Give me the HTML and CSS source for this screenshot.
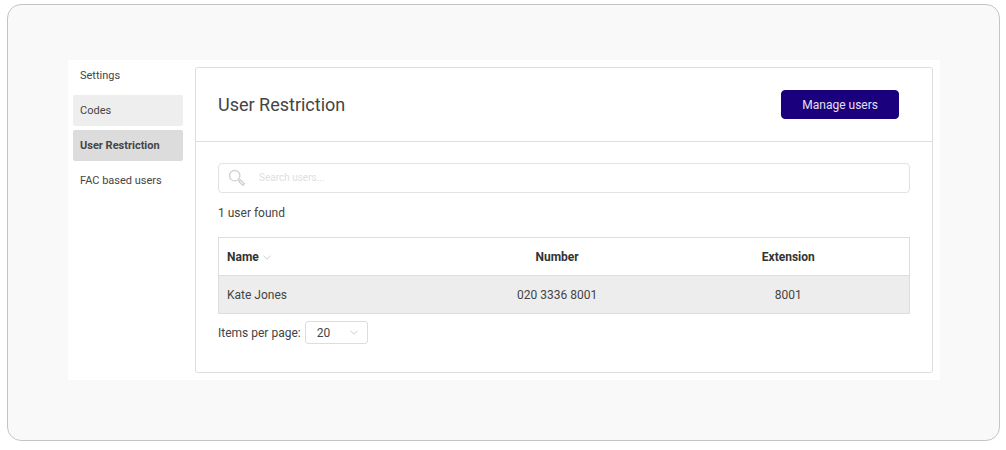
FILE: index.html
```html
<!DOCTYPE html>
<html lang="en">
<head>
  <meta charset="utf-8">
  <title>User Restriction</title>
  <link rel="stylesheet" href="styles.css">
</head>
<body>

<div class="frame">
  <div class="app">

    <nav class="sidebar">
      <a href="#settings">Settings</a>
      <a href="#codes" class="hover">Codes</a>
      <a href="#restriction" class="active">User Restriction</a>
      <a href="#fac">FAC based users</a>
    </nav>

    <main class="card">
      <header class="card-header">
        <h1>User Restriction</h1>
        <button type="button" class="manage">Manage users</button>
      </header>

      <div class="card-body">
        <div class="search">
          <svg class="search-icon" viewBox="0 0 18 18" aria-hidden="true">
            <circle cx="6.7" cy="6.7" r="5.2" />
            <path d="M10.5 10.5l1.5 1.5M12.6 11l3.8 3.7-1.6 1.6-3.8-3.7z" />
          </svg>
          <input type="text" placeholder="Search users..." aria-label="Search users">
        </div>

        <p class="count">1 user found</p>

        <table class="users">
          <thead>
            <tr>
              <th class="name">
                Name
                <svg class="chevron" viewBox="0 0 8 5" aria-hidden="true"><path d="M.5.8L4 4.2 7.5.8" /></svg>
              </th>
              <th class="number">Number</th>
              <th>Extension</th>
            </tr>
          </thead>
          <tbody>
            <tr>
              <td class="name">Kate Jones</td>
              <td>020 3336 8001</td>
              <td>8001</td>
            </tr>
          </tbody>
        </table>

        <div class="paging">
          <label for="per_page">Items per page:</label>
          <div class="select-wrap">
            <select id="per_page" name="per_page">
              <option value="10">10</option>
              <option value="20" selected>20</option>
              <option value="50">50</option>
            </select>
            <svg class="chevron" viewBox="0 0 8 5" aria-hidden="true"><path d="M.5.8L4 4.2 7.5.8" /></svg>
          </div>
        </div>
      </div>
    </main>

  </div>
</div>

</body>
</html>
```

FILE: styles.css
```css
* {
  box-sizing: border-box;
}

body {
  margin: 4px 6px 8px 7px;
  background: #fff;
  color: #444;
  font-family: Roboto, "Liberation Sans", sans-serif;
  font-size: 12px;
  line-height: 16px;
}

input,
select,
button {
  font: inherit;
  color: inherit;
}

.frame {
  padding: 55px 59px 60px 60px;
  background: #f9f9f9;
  border: 1px solid #c4c4c4;
  border-radius: 14px;
}

.app {
  display: flex;
  gap: 12px;
  padding: 0 7px 7px 5px;
  background: #fff;
}

.sidebar {
  display: flex;
  flex-direction: column;
  flex: 0 0 110px;
  gap: 4px;
  font-size: 11px;
}

.sidebar a {
  padding: 8px 7px 7px;
  border-radius: 2px;
  color: #444;
  text-decoration: none;
}

.sidebar .hover {
  background: #eee;
}

.sidebar .active {
  background: #dcdcdc;
  font-weight: bold;
}

.card {
  flex: 1;
  margin-top: 7px;
  border: 1px solid #ddd;
  border-radius: 3px;
}

.card-header {
  display: flex;
  align-items: center;
  justify-content: space-between;
  padding: 22px 33px 22px 22px;
  border-bottom: 1px solid #ddd;
}

h1 {
  margin: 0;
  font-size: 18px;
  font-weight: normal;
  line-height: 24px;
}

.manage {
  padding: 6px 20px 5px;
  border: 1px solid #1b007d;
  border-radius: 4px;
  background: #1b007d;
  color: #e4e0f0;
}

.card-body {
  padding: 21px 22px 28px;
}

.search {
  display: flex;
  align-items: center;
  gap: 13px;
  height: 30px;
  padding: 0 9px;
  border: 1px solid #e2e2e2;
  border-radius: 4px;
}

.search-icon {
  width: 18px;
  height: 18px;
  fill: none;
  stroke: #d2d2d2;
  stroke-width: 1.4;
}

.search input {
  flex: 1;
  padding: 0;
  border: 0;
  outline: 0;
  background: none;
  font-size: 10px;
}

.search input::placeholder {
  color: #e0e0e0;
}

.count {
  margin: 12px 0 16px;
}

.users {
  width: 100%;
  table-layout: fixed;
  border: 1px solid #ddd;
  border-collapse: collapse;
  text-align: center;
}

.users th,
.users td {
  padding: 11px 8px 10px;
}

.users th {
  color: #333;
}

.users .name {
  width: 33%;
  text-align: left;
}

.users .number {
  width: 32%;
}

.users tbody tr {
  background: #ededed;
  border-top: 1px solid #ddd;
}

.chevron {
  width: 8px;
  height: 5px;
  fill: none;
  stroke: #ccc;
}

.users .chevron {
  margin: 0 0 1px 1px;
}

.paging {
  display: flex;
  align-items: center;
  gap: 4px;
  margin-top: 7px;
}

.select-wrap {
  display: grid;
  align-items: center;
}

.select-wrap select,
.select-wrap .chevron {
  grid-area: 1 / 1;
}

.select-wrap select {
  width: 63px;
  height: 23px;
  padding: 0 11px;
  border: 1px solid #ddd;
  border-radius: 3px;
  background: none;
  appearance: none;
}

.select-wrap .chevron {
  justify-self: end;
  margin-right: 10px;
  pointer-events: none;
}
```
